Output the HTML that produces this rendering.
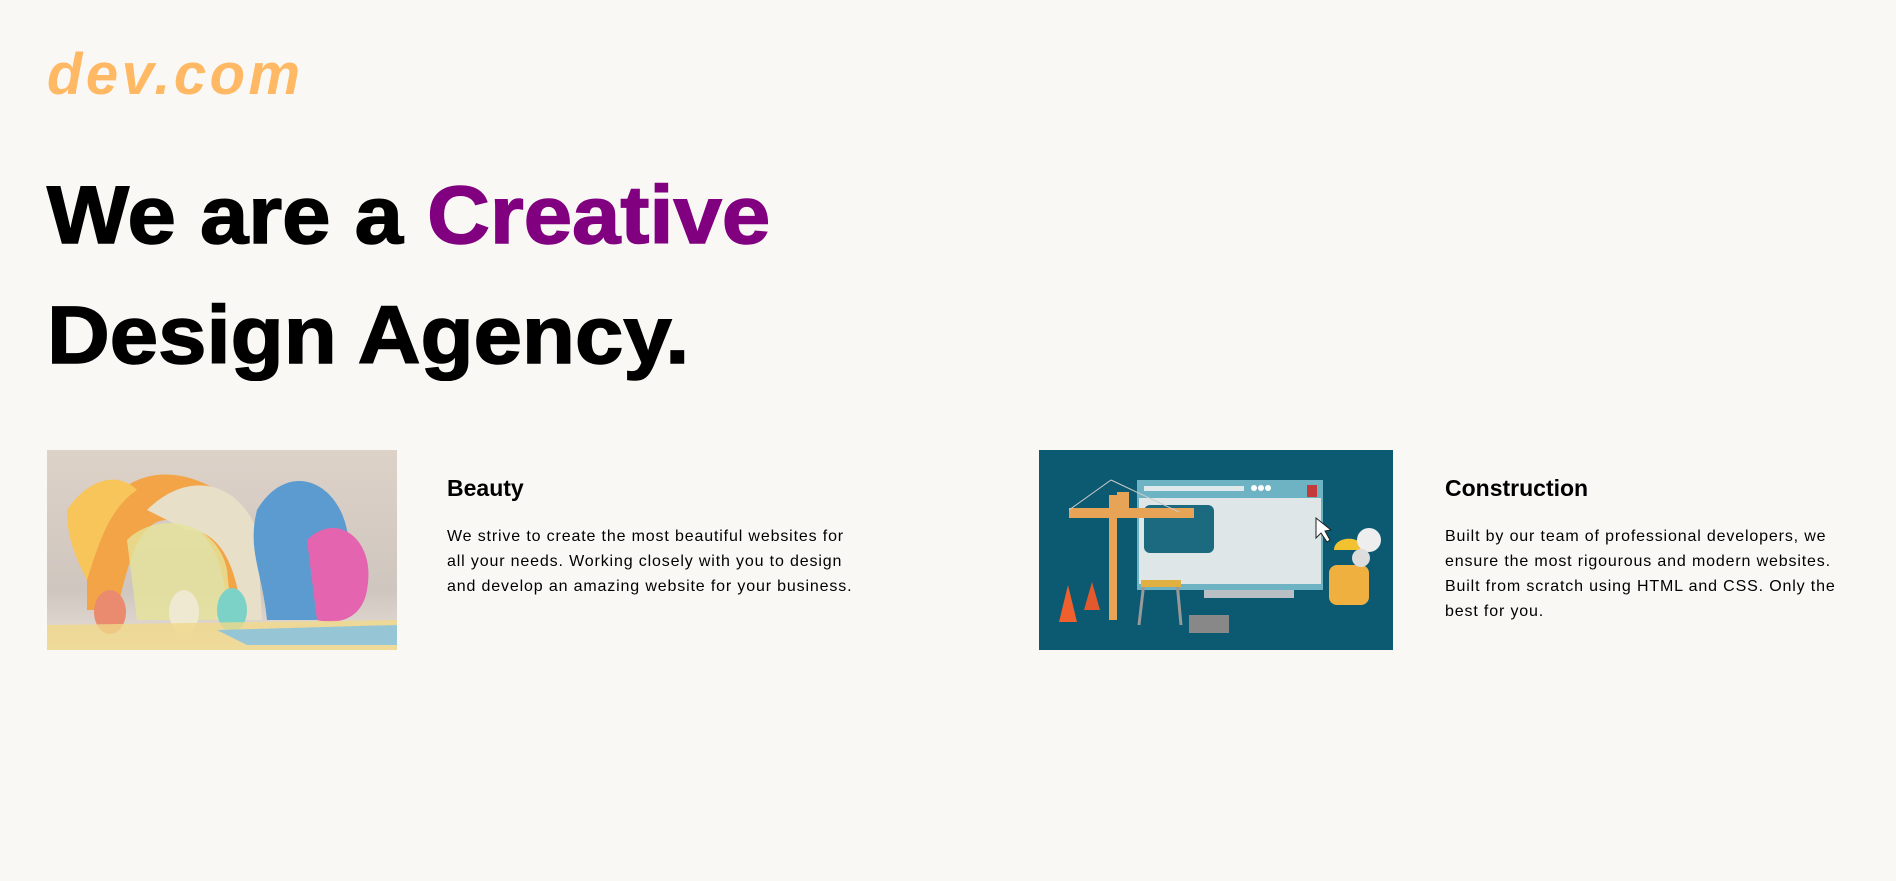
<!DOCTYPE html>
<html><head><meta charset="utf-8"><style>
html,body{margin:0;padding:0;}
body{width:1896px;height:881px;background:#f9f8f5;font-family:"Liberation Sans",sans-serif;position:relative;overflow:hidden;color:#000;}
.logo{position:absolute;left:47px;top:40px;font-size:58px;font-style:italic;font-weight:bold;color:#ffb964;letter-spacing:3.5px;line-height:70px;}
.h{position:absolute;left:47px;font-size:82px;font-weight:bold;line-height:100px;transform:scaleX(1.06);transform-origin:0 0;-webkit-text-stroke:1.5px currentColor;white-space:nowrap;}
.img{position:absolute;top:450px;height:200px;overflow:hidden;}
.t{position:absolute;font-size:23px;font-weight:bold;top:475px;}
.p{position:absolute;top:524px;font-size:16px;line-height:25px;letter-spacing:0.85px;white-space:nowrap;}
</style></head><body>
<div class="logo">dev.com</div>
<div class="h" style="top:166px">We are a <span style="color:#800080">Creative</span></div>
<div class="h" style="top:286px">Design Agency.</div>

<div class="img" style="left:47px;width:350px;background:linear-gradient(180deg,#ddd2c8,#cfc6bf 70%,#e8e0d8);">
<svg width="350" height="200">
<path d="M40 100 C60 20 120 10 170 40 C200 60 200 120 200 170 L180 170 C180 110 160 70 120 70 C90 70 80 120 70 160 L40 160 Z" fill="#f3a447"/>
<path d="M100 60 C140 20 190 30 210 80 L215 170 L195 170 C190 110 170 80 140 80Z" fill="#e7dfc8"/>
<path d="M80 90 C110 60 170 70 180 120 L185 170 L90 170Z" fill="#e6e39a" opacity=".8"/>
<path d="M210 60 C240 10 290 30 300 80 C310 120 290 170 270 170 L220 170 C215 120 200 100 210 60Z" fill="#5b9bd0"/>
<path d="M260 90 C290 60 330 90 320 140 C315 170 290 175 270 170Z" fill="#e464b0"/>
<path d="M20 60 C40 30 70 20 90 40 C60 60 50 100 40 130 C30 110 20 90 20 60Z" fill="#f7c55a"/>
<ellipse cx="63" cy="162" rx="16" ry="22" fill="#ea8a6e"/>
<ellipse cx="137" cy="162" rx="15" ry="22" fill="#eee9d0"/>
<ellipse cx="185" cy="160" rx="15" ry="22" fill="#7dd2c8"/>
<path d="M0 175 L350 170 L350 200 L0 200Z" fill="#f0d88a" opacity=".8"/>
<path d="M170 180 L350 175 L350 195 L200 195Z" fill="#7fc0e6" opacity=".8"/>
</svg></div>
<div class="t" style="left:447px">Beauty</div>
<div class="p" style="left:447px">We strive to create the most beautiful websites for<br>all your needs. Working closely with you to design<br>and develop an amazing website for your business.</div>

<div class="img" style="left:1039px;width:354px;background:#0b5a72;">
<svg width="354" height="200">
<rect x="98" y="30" width="186" height="110" fill="#6db3c4"/>
<rect x="100" y="48" width="182" height="86" fill="#dfe6e8"/>
<rect x="105" y="55" width="70" height="48" rx="6" fill="#1c6a80"/>
<rect x="105" y="36" width="100" height="5" fill="#dfe8ea"/>
<circle cx="215" cy="38" r="3" fill="#fff"/><circle cx="222" cy="38" r="3" fill="#fff"/><circle cx="229" cy="38" r="3" fill="#fff"/>
<rect x="268" y="35" width="10" height="12" fill="#c43a3a"/>
<rect x="70" y="45" width="8" height="125" fill="#e8a456"/>
<rect x="30" y="58" width="125" height="10" fill="#e8a456"/>
<rect x="78" y="42" width="12" height="18" fill="#e8a456"/>
<path d="M72 30 L30 60 M72 30 L140 62" stroke="#ccc" stroke-width="1"/>
<path d="M20 172 L29 135 L38 172Z" fill="#f0602e"/>
<path d="M45 160 L53 132 L61 160Z" fill="#e4582e"/>
<path d="M100 175 L105 132 L138 132 L142 175" stroke="#999" stroke-width="3" fill="none"/>
<rect x="102" y="130" width="40" height="7" fill="#e0b040"/>
<rect x="165" y="140" width="90" height="8" fill="#b8c0c5"/>
<rect x="150" y="165" width="40" height="18" fill="#888"/>
<path d="M295 100 C295 85 325 85 325 100Z" fill="#f2c230"/>
<rect x="290" y="115" width="40" height="40" rx="8" fill="#f0b040"/>
<circle cx="330" cy="90" r="12" fill="#eee"/><circle cx="322" cy="108" r="9" fill="#ddd"/>
<path d="M277 68 L277 88 L282 83 L288 92 L291 90 L286 81 L292 80Z" fill="#fff" stroke="#222"/>
</svg></div>
<div class="t" style="left:1445px">Construction</div>
<div class="p" style="left:1445px">Built by our team of professional developers, we<br>ensure the most rigourous and modern websites.<br>Built from scratch using HTML and CSS. Only the<br>best for you.</div>
</body></html>
